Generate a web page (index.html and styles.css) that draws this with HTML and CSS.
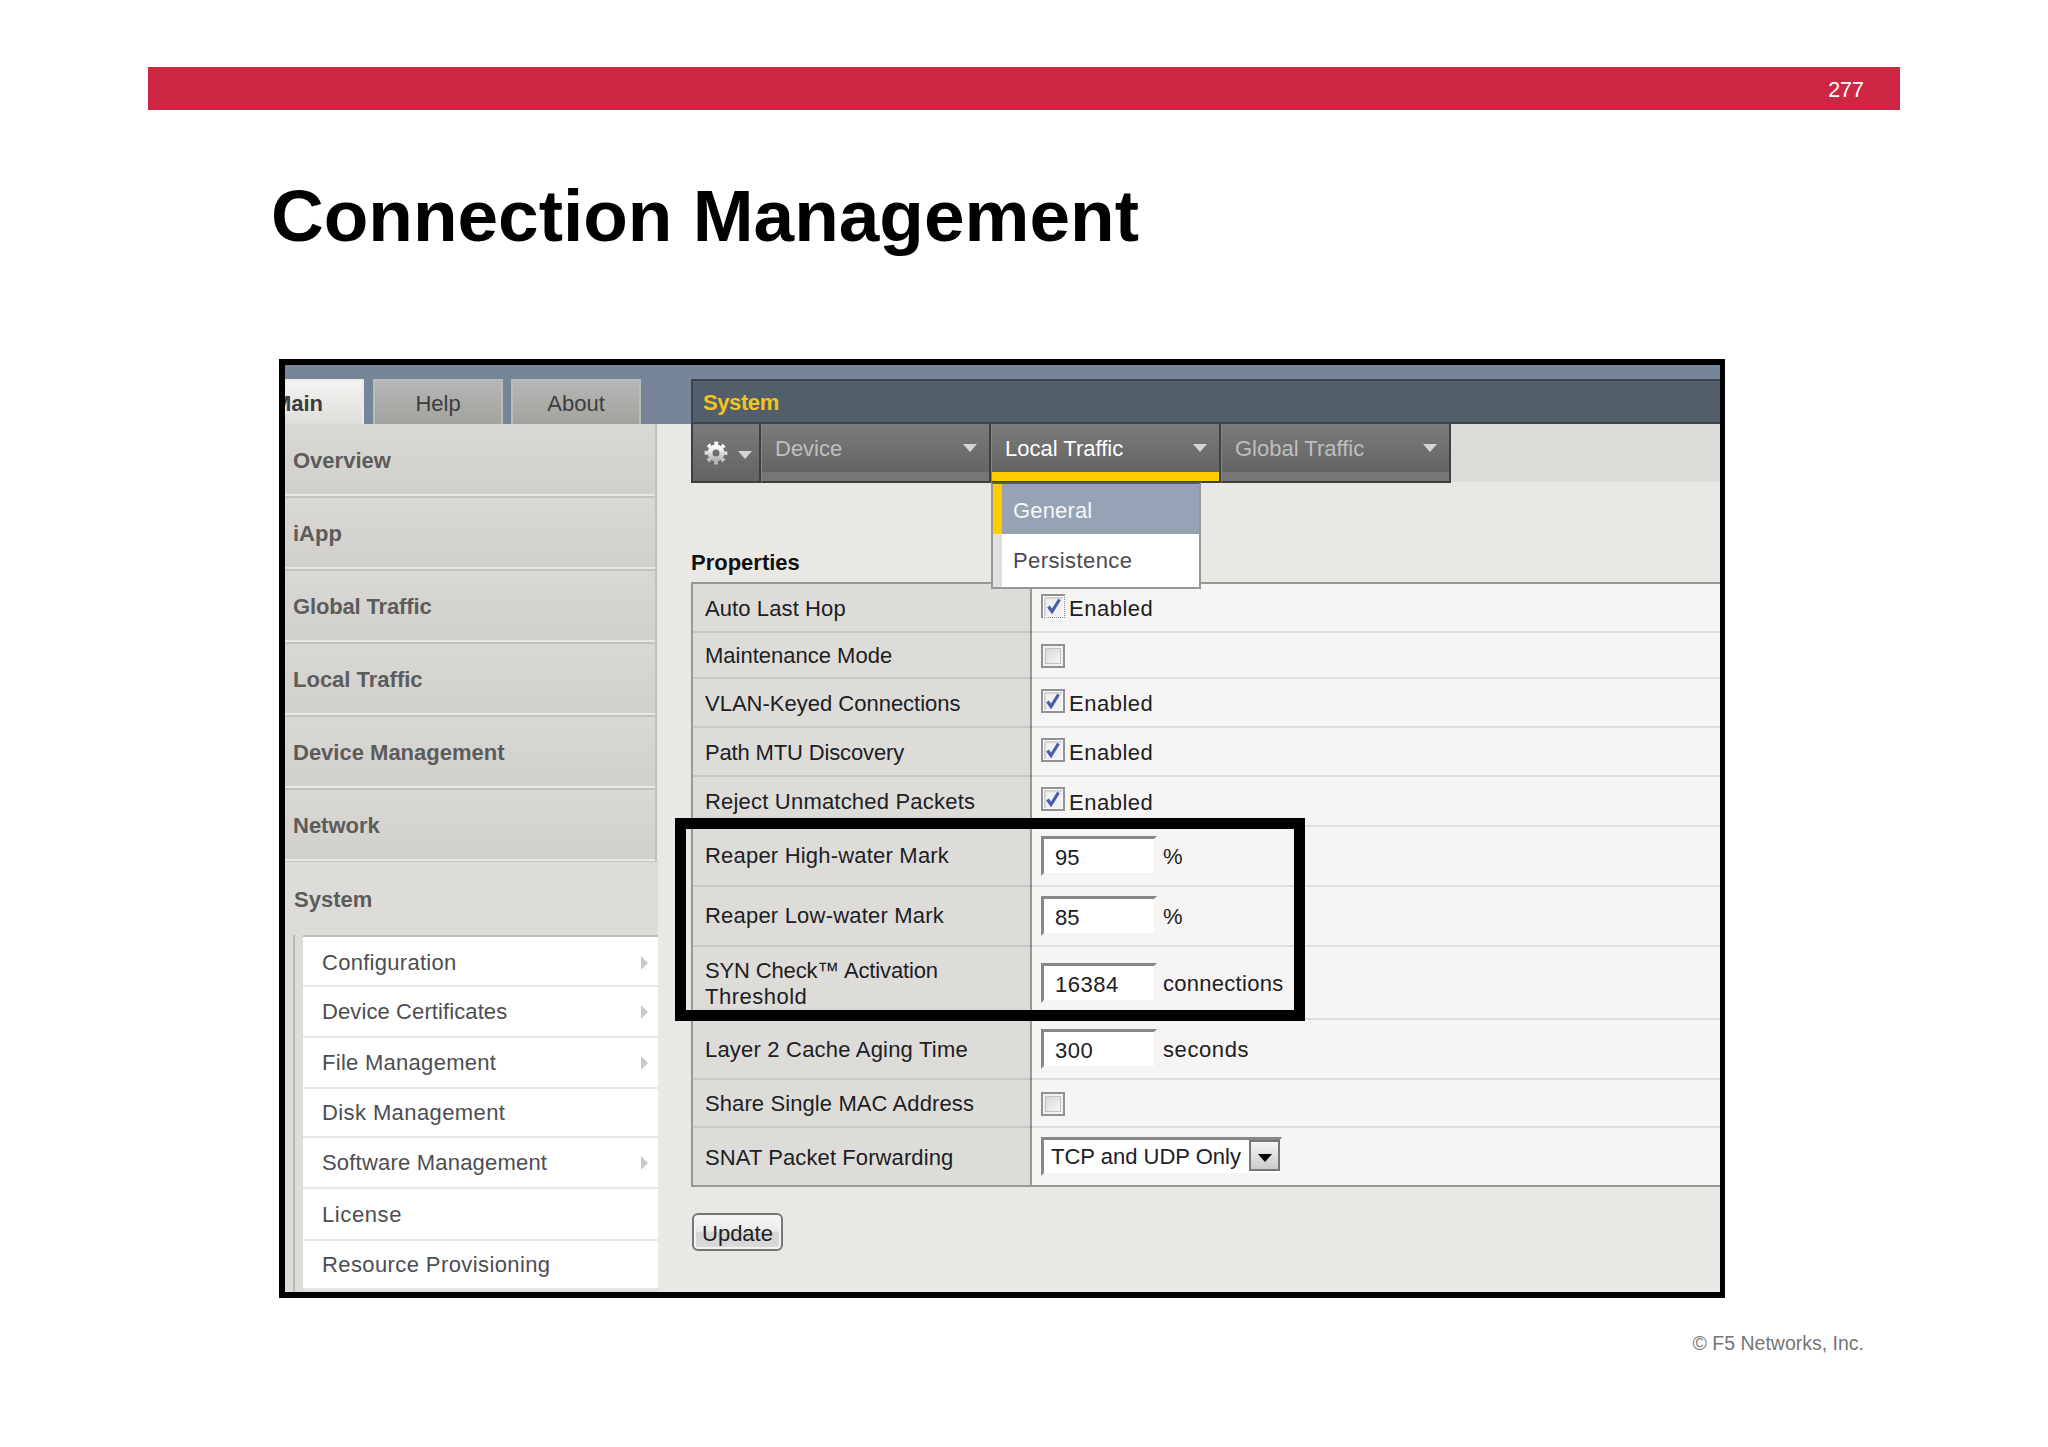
FILE: index.html
```html
<!DOCTYPE html>
<html lang="en">
<head>
<meta charset="utf-8">
<title>Connection Management</title>
<link rel="stylesheet" href="styles.css">
</head>
<body>
<div class="slide">
  <header class="banner">277</header>
  <h1 class="title">Connection Management</h1>

  <div class="console">
    <aside class="side">
      <div class="tabs">
        <div class="tab tab-main"><b>Main</b></div>
        <div class="tab">Help</div>
        <div class="tab">About</div>
      </div>
      <nav class="nav">
        <div class="nav-item first">Overview</div>
        <div class="nav-item">iApp</div>
        <div class="nav-item snug">Global Traffic</div>
        <div class="nav-item">Local Traffic</div>
        <div class="nav-item">Device Management</div>
        <div class="nav-item">Network</div>
      </nav>
      <div class="section">System</div>
      <div class="submenu">
        <div class="sub h50 ls3">Configuration<i class="right"></i></div>
        <div class="sub h51 ls1">Device Certificates<i class="right"></i></div>
        <div class="sub h51 ls3">File Management<i class="right"></i></div>
        <div class="sub h49 ls4">Disk Management</div>
        <div class="sub h51 ls2">Software Management<i class="right"></i></div>
        <div class="sub h52 ls6">License</div>
        <div class="sub h49 ls4">Resource Provisioning</div>
      </div>
    </aside>

    <main class="main">
      <div class="heading">System</div>
      <div class="menubar">
        <div class="gear">
          <svg width="24" height="24" viewBox="0 0 24 24">
            <defs><linearGradient id="metal" x1="0" y1="0" x2="0" y2="1"><stop offset="0" stop-color="#fff"/><stop offset="1" stop-color="#b8b8b8"/></linearGradient></defs>
            <g fill="none" stroke="url(#metal)">
              <circle cx="12" cy="12" r="6" stroke-width="5"/>
              <circle cx="12" cy="12" r="9.4" stroke-width="4" stroke-dasharray="3.69 3.69" stroke-dashoffset="1.85"/>
            </g>
          </svg>
          <i class="down"></i>
        </div>
        <div class="menu">Device<i class="down"></i></div>
        <div class="menu active">Local Traffic<i class="down"></i>
          <div class="dropdown">
            <div class="option chosen">General</div>
            <div class="option ls4">Persistence</div>
          </div>
        </div>
        <div class="menu">Global Traffic<i class="down"></i></div>
      </div>
      <h2 class="props">Properties</h2>
      <div class="table">
        <div class="row h49"><div class="label ls1">Auto Last Hop</div><div class="value"><span class="check focus"><svg viewBox="0 0 14 16"><path d="M1.5 8.5 5 13.5 12.5 1.5"/></svg></span><span class="on">Enabled</span></div></div>
        <div class="row h46"><div class="label">Maintenance Mode</div><div class="value"><span class="check off"></span></div></div>
        <div class="row h49"><div class="label">VLAN-Keyed Connections</div><div class="value"><span class="check"><svg viewBox="0 0 14 16"><path d="M1.5 8.5 5 13.5 12.5 1.5"/></svg></span><span class="on">Enabled</span></div></div>
        <div class="row h49"><div class="label tight">Path MTU Discovery</div><div class="value"><span class="check"><svg viewBox="0 0 14 16"><path d="M1.5 8.5 5 13.5 12.5 1.5"/></svg></span><span class="on">Enabled</span></div></div>
        <div class="row h50"><div class="label ls2">Reject Unmatched Packets</div><div class="value"><span class="check"><svg viewBox="0 0 14 16"><path d="M1.5 8.5 5 13.5 12.5 1.5"/></svg></span><span class="on">Enabled</span></div></div>
        <div class="row h60 raised"><div class="label ls2">Reaper High-water Mark</div><div class="value"><span class="field">95</span><span class="unit">%</span></div></div>
        <div class="row h60 raised"><div class="label ls2">Reaper Low-water Mark</div><div class="value"><span class="field">85</span><span class="unit">%</span></div></div>
        <div class="row h73"><div class="label"><span class="tight">SYN Check™ Activation</span><br><span class="ls5">Threshold</span></div><div class="value"><span class="field ls5">16384</span><span class="unit ls3">connections</span></div></div>
        <div class="row h60"><div class="label ls2">Layer 2 Cache Aging Time</div><div class="value"><span class="field ls5">300</span><span class="unit ls6">seconds</span></div></div>
        <div class="row h48"><div class="label ls1">Share Single MAC Address</div><div class="value"><span class="check off"></span></div></div>
        <div class="row h59"><div class="label ls1">SNAT Packet Forwarding</div><div class="value"><span class="select">TCP and UDP Only<span class="opener"><i></i></span></span></div></div>
      </div>
      <div class="update">Update</div>
    </main>
    <div class="callout"></div>
  </div>

  <footer class="copyright">© F5 Networks, Inc.</footer>
</div>
</body>
</html>
```
FILE: styles.css
```css
* { box-sizing: border-box; }
body { margin: 0; background: #fff; font-family: "Liberation Sans", Arial, sans-serif; }
.slide { width: 2048px; height: 1447px; overflow: hidden; padding-top: 67px; }
.banner { margin-left: 148px; width: 1752px; height: 43px; line-height: 46px; background: #cd2743; color: #fff; font-size: 21.5px; text-align: right; padding-right: 36px; }
.title { margin: 63px 0 0 271px; height: 84px; line-height: 86px; font-size: 73px; font-weight: bold; color: #000; white-space: nowrap; }
.console { position: relative; margin: 102px 0 0 279px; width: 1446px; height: 939px; border: 6px solid #000; border-right-width: 5px; display: flex; overflow: hidden; font-size: 22px; white-space: nowrap; background: linear-gradient(#768698 59px, #e9e8e4 59px); }
.copyright { margin: 33px 184px 0 0; text-align: right; font-size: 19.5px; line-height: 24px; color: #757575; }

/* Letter spacing steps */
.ls1 { letter-spacing: .1px; }
.ls2 { letter-spacing: .2px; }
.ls3 { letter-spacing: .28px; }
.ls4 { letter-spacing: .4px; }
.ls5 { letter-spacing: .5px; }
.ls6 { letter-spacing: .6px; }
.tight { letter-spacing: -.15px; }
.snug { letter-spacing: -.15px; }

/* Row heights */
.h46 { height: 46px; } .h48 { height: 48px; } .h49 { height: 49px; } .h50 { height: 50px; }
.h51 { height: 51px; } .h52 { height: 52px; } .h59 { height: 59px; } .h60 { height: 60px; } .h73 { height: 73px; }

/* Sidebar */
.side { width: 373px; flex: none; }
.tabs { display: flex; height: 59px; padding-top: 14px; }
.tab { width: 130px; height: 45px; margin-right: 8px; text-align: center; color: #3c3d40; background: linear-gradient(#b6b6b4, #a2a39f); border: 2px solid #b9bcbd; border-bottom: 0; line-height: 45px; }
.tab-main { width: 79px; margin-right: 9px; display: flex; justify-content: flex-end; padding-right: 39px; background: linear-gradient(#f4f3f2, #dfded9); border-color: #eceae8; border-left: 0; }
.nav { width: 372px; border-right: 2px solid #c1c1bd; }
.nav-item { height: 73px; padding-left: 8px; font-weight: bold; color: #5c5c5c; border-top: 2px solid #c3c2be; border-bottom: 2px solid #e8e8e4; background: linear-gradient(#d9d8d4, #d1d0cc); line-height: 72px; }
.nav-item.first { height: 72px; border-top: 0; line-height: 74px; }
.section { height: 74px; line-height: 75px; padding-left: 9px; font-weight: bold; color: #5c5c5c; background: #dddcd8; border-top: 1px solid #c6c6c2; }
.submenu { height: 357px; padding-left: 10px; background: linear-gradient(90deg, #dddcd8 8px, #b9b9b6 8px, #b9b9b6 10px, transparent 10px), #dddcdb; }
.submenu .sub:first-child { border-top: 2px solid #bcbcb8; height: 52px; padding-top: 3px; }
.sub { display: flex; align-items: center; justify-content: space-between; margin-left: 8px; padding: 1px 10px 0 19px; color: #4d4d52; background: #fff; border-bottom: 2px solid #e7e7e6; }
.right { border: 7px solid transparent; border-left-color: #c9c9c9; border-right: 0; }

/* Main panel */
.main { width: 1062px; padding: 14px 0 0 33px; }
.heading { height: 45px; padding-left: 10px; line-height: 43px; letter-spacing: -.4px; font-weight: bold; color: #f2c41d; background: #525e69; border: 2px solid #38444e; border-right: 0; }
.menubar { display: flex; height: 59px; background: linear-gradient(#dddcd9 58px, #e9e8e4 58px); }
.gear, .menu { height: 59px; border-bottom: 2px solid #3f3f3f; border-right: 2px solid #3f3f3f; }
.gear { width: 70px; display: flex; align-items: center; border-left: 2px solid #3f3f3f; padding-left: 11px; gap: 10px; background: linear-gradient(#7b7b7b, #636363); }
.gear .down { margin-top: 5px; }
.menu { position: relative; width: 230px; padding: 0 12px 7px 13px; display: flex; align-items: center; justify-content: space-between; color: #bebebe; border-left: 1px solid #858585; background: linear-gradient(#7c7c7c, #636363 48px, #767676 48px); }
.menu .down { margin-bottom: 2px; }
.menu.active { color: #fff; background: linear-gradient(#7c7c7c, #636363 48px, #fc0 48px); }
.down { border: 7px solid transparent; border-top: 8px solid #d4d4d4; border-bottom: 0; }
.dropdown { position: absolute; z-index: 2; left: -1px; top: 58px; width: 210px; height: 107px; border: 2px solid #989898; border-top: 2px solid #5b5b55; background: #fff; }
.option { height: 53px; line-height: 54px; padding-left: 11px; color: #4b4b50; border-left: 9px solid #e1e0e1; }
.chosen { height: 50px; line-height: 53px; letter-spacing: .15px; color: #f5f6f8; background: #95a3b5; border-left-color: #fc0; }
.props { margin: 66px 0 0; height: 33px; line-height: 28px; font-size: 22px; color: #111; }
.table { border-top: 2px solid #989898; border-left: 2px solid #989898; border-bottom: 2px solid #989898; height: 605px; color: #202024; }
.row { display: flex; border-bottom: 2px solid rgba(0, 0, 0, .09); background: linear-gradient(90deg, #dddcd9 337px, #989898 337px, #989898 339px, #f6f5f4 339px); }
.row:last-child { border-bottom: 0; height: 57px; }
.label { width: 339px; flex: none; padding: 2px 0 0 12px; line-height: 26px; align-self: center; }
.raised .label { padding-top: 0; }
.value { display: flex; align-items: center; padding-left: 9px; }
.check { width: 24px; height: 24px; border: 2px solid #929292; display: flex; justify-content: center; align-items: center; background: #f1f1f1; box-shadow: inset 0 0 0 1px #f8f8f8, inset 3px 3px 1px #ced3d8; margin-bottom: 4px; }
.check.off { margin: 2px 0 0; background: linear-gradient(135deg, #cfd3d5, #fbfbfb); box-shadow: inset 0 0 0 2px #f0f0f0, inset 0 0 0 3px #bfc1c3; }
.check.focus { border-right-style: dotted; border-bottom-style: dotted; border-width: 2px 1px 1px 2px; }
.check svg { width: 14px; height: 16px; fill: none; stroke: #4d5da5; stroke-width: 3.2; }
.on { margin: 3px 0 0 4px; letter-spacing: .5px; }
.unit { padding-top: 2px; }
.field { width: 116px; height: 40px; margin-right: 6px; padding-left: 11px; line-height: 38px; border: 3px solid transparent; border-top-color: #888; border-left-color: #888; background: #fff; background-clip: padding-box; }
.select { display: flex; width: 241px; height: 39px; padding-left: 7px; line-height: 33px; border: 3px solid transparent; border-right-width: 2px; border-top-color: #888; border-left-color: #888; background: #fff; background-clip: padding-box; }
.opener { width: 31px; height: 31px; margin-left: auto; border: 2px solid #777; background: linear-gradient(#f4f4f4, #ccc); display: flex; align-items: center; justify-content: center; }
.opener i { margin-top: 4px; border: 7px solid transparent; border-top: 8px solid #000; border-bottom: 0; }
.update { margin: 26px 0 0 1px; width: 91px; height: 38px; border: 2px solid #777; border-radius: 6px; line-height: 37px; text-align: center; color: #202024; background: linear-gradient(#f6f6f6, #eaeaea 48%, #d5d5d5 52%, #dadada); box-shadow: inset 0 0 0 2px #f3f3f3; }
.callout { position: absolute; left: 390px; top: 453px; width: 630px; height: 203px; border: 11px solid #000; }
```
